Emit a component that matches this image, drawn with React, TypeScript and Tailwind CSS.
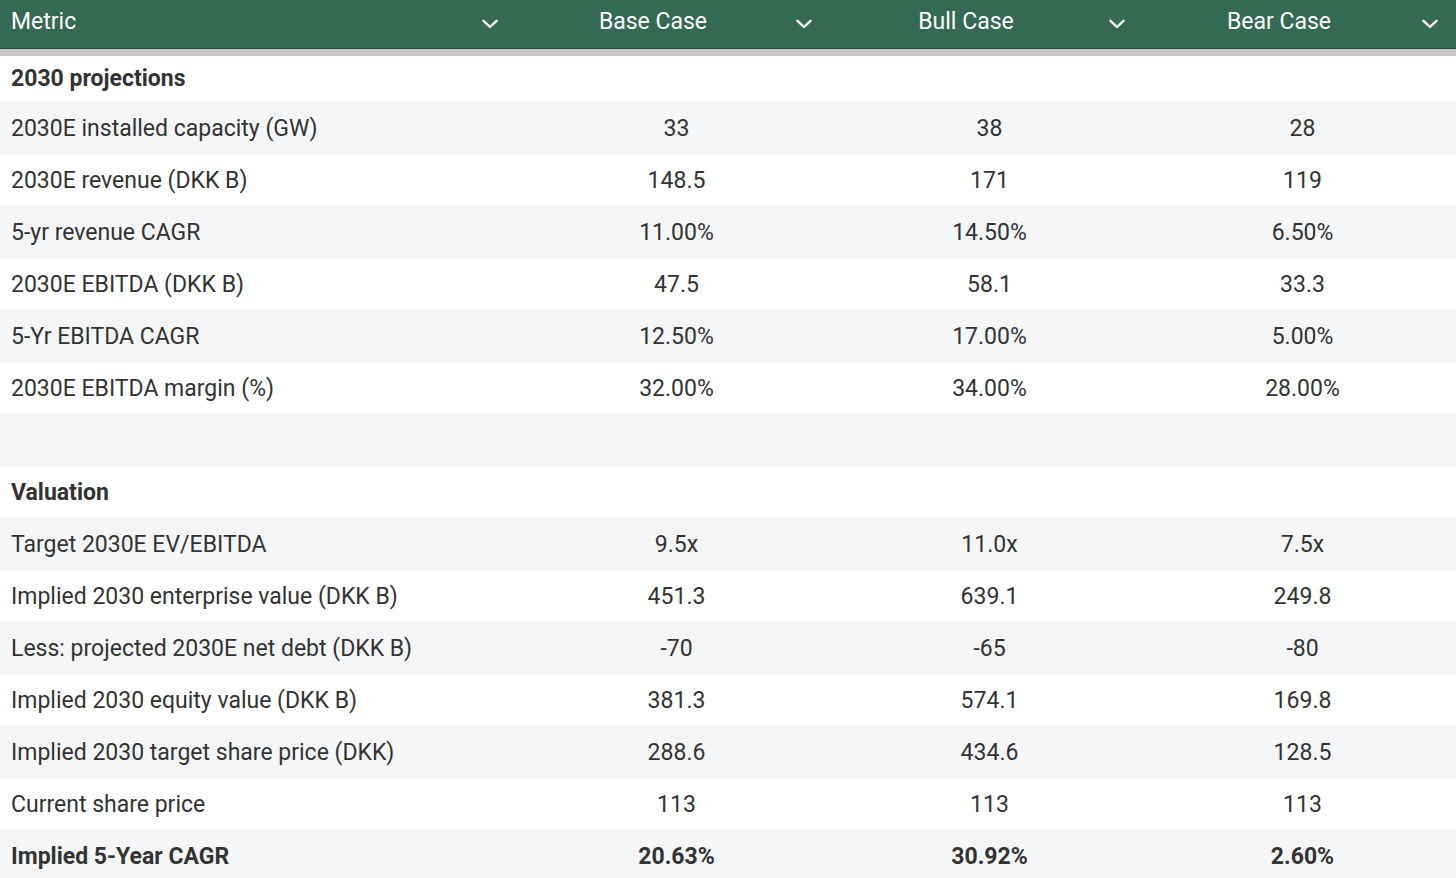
import React from "react";

type Row = { label: string; vals?: [string, string, string]; bold?: boolean; empty?: boolean };

const rows: Row[] = [
  { label: "2030 projections", bold: true },
  { label: "2030E installed capacity (GW)", vals: ["33", "38", "28"] },
  { label: "2030E revenue (DKK B)", vals: ["148.5", "171", "119"] },
  { label: "5-yr revenue CAGR", vals: ["11.00%", "14.50%", "6.50%"] },
  { label: "2030E EBITDA (DKK B)", vals: ["47.5", "58.1", "33.3"] },
  { label: "5-Yr EBITDA CAGR", vals: ["12.50%", "17.00%", "5.00%"] },
  { label: "2030E EBITDA margin (%)", vals: ["32.00%", "34.00%", "28.00%"] },
  { label: "", empty: true },
  { label: "Valuation", bold: true },
  { label: "Target 2030E EV/EBITDA", vals: ["9.5x", "11.0x", "7.5x"] },
  { label: "Implied 2030 enterprise value (DKK B)", vals: ["451.3", "639.1", "249.8"] },
  { label: "Less: projected 2030E net debt (DKK B)", vals: ["-70", "-65", "-80"] },
  { label: "Implied 2030 equity value (DKK B)", vals: ["381.3", "574.1", "169.8"] },
  { label: "Implied 2030 target share price (DKK)", vals: ["288.6", "434.6", "128.5"] },
  { label: "Current share price", vals: ["113", "113", "113"] },
  { label: "Implied 5-Year CAGR", vals: ["20.63%", "30.92%", "2.60%"], bold: true },
];

function Chevron() {
  return (
    <svg width="16" height="10" viewBox="0 0 16 10" fill="none">
      <path d="M1.5 1.8 L8 8 L14.5 1.8" stroke="white" strokeWidth="2.4" strokeLinecap="round" strokeLinejoin="round" />
    </svg>
  );
}

const cols = "grid grid-cols-[520px_313px_313px_313px]";

export default function App() {
  return (
    <div className="w-[1456px] h-[878px] overflow-hidden bg-white" style={{ fontFamily: "Roboto, 'Liberation Sans', sans-serif" }}>
      <div className="w-[1459px]">
        <div className={`${cols} h-[49px] bg-[#346a53] border-b border-[#244d3a] text-white text-[23px]`}>
          <div className="flex items-center pl-[11px] pr-[22px]">
            <span className="flex-1 pb-[4px]">Metric</span>
            <Chevron />
          </div>
          {["Base Case", "Bull Case", "Bear Case"].map((h) => (
            <div key={h} className="flex items-center">
              <span className="w-[266px] text-center pb-[4px]">{h}</span>
              <span className="flex-1 flex justify-center pr-[12px]">
                <Chevron />
              </span>
            </div>
          ))}
        </div>
        <div className="h-[7px] bg-[#c9c9c9]" />
        {rows.map((r, i) => (
          <div
            key={i}
            className={`${cols} ${i === 0 ? "h-[46px]" : "h-[52px]"} ${i % 2 === 1 ? "bg-[#f5f6f7]" : "bg-white"} text-[#333333] text-[23px] ${r.bold ? "font-bold" : ""}`}
          >
            <div className={`flex items-center pl-[11px] ${i === 0 ? "" : "pt-[2px]"}`}>{r.label}</div>
            {[0, 1, 2].map((c) => (
              <div key={c} className={`flex items-center justify-center ${i === 0 ? "" : "pt-[2px]"}`}>
                {r.vals ? r.vals[c] : ""}
              </div>
            ))}
          </div>
        ))}
      </div>
    </div>
  );
}
